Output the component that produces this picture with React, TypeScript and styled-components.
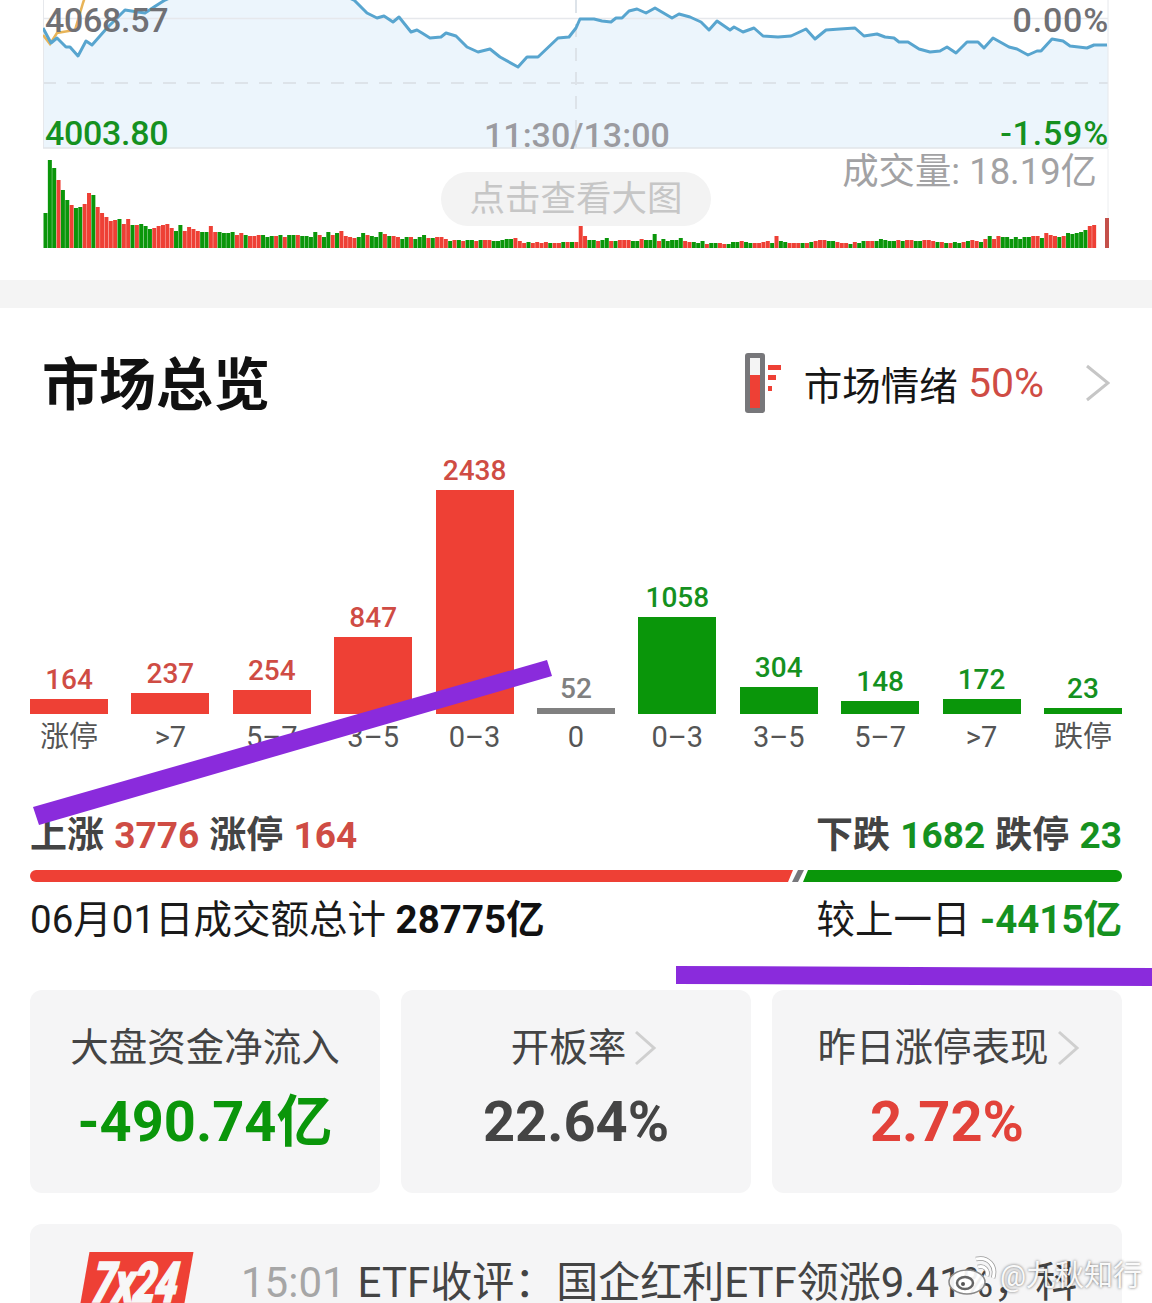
import React from "react";
import styled, { createGlobalStyle } from "styled-components";

const NUM_FONT = `Roboto, "Noto Sans CJK SC", sans-serif`;
const RED = "#ee4035";
const GREEN = "#0a960a";
const RED_TEXT = "#cf4c44";
const GREEN_TEXT = "#15911f";

const GlobalStyle = createGlobalStyle`
  html, body {
    margin: 0;
    padding: 0;
    background: #fff;
    font-family: ${NUM_FONT};
  }
`;

const Page = styled.div`
  position: relative;
  width: 1152px;
  height: 1303px;
  overflow: hidden;
  background: #fff;
`;

const PricePane = styled.div`
  position: relative;
  width: 1066px;
  height: 149px;
  margin-left: 43px;
  overflow: hidden;
  font-size: 34px;
  font-weight: 500;
  line-height: 40px;
`;

const ChartSvg = styled.svg`
  position: absolute;
  left: 0;
  top: 0;
  display: block;
`;

const PriceLabel = styled.span<{ $color: string; $x: "left" | "right" | "center"; $top: number }>`
  position: absolute;
  top: ${(p) => p.$top}px;
  color: ${(p) => p.$color};
  white-space: nowrap;
  ${(p) =>
    p.$x === "left"
      ? "left: 2px; letter-spacing: -0.3px;"
      : p.$x === "right"
      ? "right: 0; letter-spacing: 0.8px;"
      : "left: 441px;"}
`;

const VolumePane = styled.div`
  position: relative;
  width: 1066px;
  height: 131px;
  margin-left: 43px;
`;

const VolumeText = styled.span`
  position: absolute;
  right: 12px;
  top: 2px;
  color: #a2a2a4;
  font-size: 36.4px;
  line-height: 42px;
  white-space: nowrap;
`;

const BigPicPill = styled.div`
  position: absolute;
  left: 398px;
  top: 23px;
  width: 270px;
  height: 54px;
  border-radius: 27px;
  background: #f3f3f3;
  color: #c6c6c6;
  font-size: 35.5px;
  line-height: 54px;
  text-align: center;
`;

const Divider = styled.div`
  height: 28px;
  background: #f4f4f4;
`;

const OverviewHeader = styled.header`
  display: flex;
  align-items: center;
  justify-content: space-between;
  height: 150px;
  padding: 0 42px 0 42px;
`;

const OverviewTitle = styled.h1`
  margin: 5px 0 0;
  color: #111;
  font-size: 57px;
  font-weight: 700;
  line-height: 70px;
`;

const Mood = styled.div`
  display: flex;
  align-items: center;
  font-size: 38.5px;
  color: #151515;
`;

const MoodValue = styled.span`
  margin-left: 10px;
  color: ${RED_TEXT};
  font-size: 41px;
`;

const MoodIcon = styled.svg`
  width: 40px;
  height: 62px;
  margin-right: 21px;
`;

const MoodChevron = styled.svg`
  width: 26px;
  height: 40px;
  margin-left: 40px;
`;

const Body = styled.section`
  padding: 0 30px;
`;

const Columns = styled.div`
  display: flex;
  justify-content: space-between;
  height: 302px;
`;

const Column = styled.div`
  display: flex;
  flex-direction: column;
  justify-content: flex-end;
  align-items: center;
  width: 78px;
`;

const ColumnValue = styled.span<{ $color: string }>`
  flex: none;
  color: ${(p) => p.$color};
  font-size: 28px;
  font-weight: 500;
  line-height: 38px;
`;

const ColumnBar = styled.div<{ $h: number; $color: string }>`
  flex: none;
  width: 100%;
  height: ${(p) => p.$h}px;
  background: ${(p) => p.$color};
`;

const ColumnLabel = styled.span`
  flex: none;
  height: 46px;
  color: #555;
  font-size: 29px;
  line-height: 46px;
  white-space: nowrap;
`;

const StatRow = styled.div`
  display: flex;
  justify-content: space-between;
  margin-top: 53px;
  color: #444;
  font-size: 37px;
  font-weight: 700;
  line-height: 46px;
  word-spacing: 1px;
`;

const Tone = styled.span<{ $color: string }>`
  color: ${(p) => p.$color};
`;

const Ratio = styled.div`
  display: flex;
  height: 12px;
  margin-top: 11px;
`;

const RatioUp = styled.div`
  flex: 1;
  background: ${RED};
  border-radius: 6px 0 0 6px;
  clip-path: polygon(0 0, 100% 0, calc(100% - 5px) 100%, 0 100%);
`;

const RatioFlat = styled.div`
  width: 12px;
  margin: 0 -1px 0 -1px;
  background: #77777b;
  clip-path: polygon(6px 0, 100% 0, 6px 100%, 0 100%);
`;

const RatioDown = styled.div`
  width: 319px;
  background: ${GREEN};
  border-radius: 0 6px 6px 0;
  clip-path: polygon(5px 0, 100% 0, 100% 100%, 0 100%);
`;

const TotalRow = styled.div`
  display: flex;
  justify-content: space-between;
  margin-top: 15px;
  color: #1a1a1a;
  font-size: 38.5px;
  line-height: 46px;
`;

const Strong = styled.b<{ $color?: string }>`
  color: ${(p) => p.$color || "#111"};
  font-weight: 700;
`;

const Cards = styled.div`
  display: flex;
  gap: 21px;
  margin-top: 47px;
`;

const Card = styled.div`
  display: flex;
  flex: 1;
  flex-direction: column;
  align-items: center;
  height: 203px;
  padding-top: 31px;
  box-sizing: border-box;
  border-radius: 12px;
  background: #f5f5f6;
`;

const CardTitle = styled.div<{ $pad?: number }>`
  display: flex;
  align-items: center;
  padding-left: ${(p) => p.$pad || 0}px;
  color: #444;
  font-size: 38.5px;
  line-height: 54px;
  white-space: nowrap;
`;

const CardChevron = styled.svg`
  width: 24px;
  height: 38px;
  margin-left: 7px;
`;

const CardValue = styled.div<{ $color: string }>`
  margin-top: 12px;
  color: ${(p) => p.$color};
  font-size: 56px;
  font-weight: 700;
  line-height: 70px;
  white-space: nowrap;
`;

const Ticker = styled.div`
  display: flex;
  align-items: flex-start;
  height: 100px;
  margin-top: 31px;
  padding: 28px 0 0 52px;
  box-sizing: border-box;
  border-radius: 12px 12px 0 0;
  background: #f5f5f6;
  white-space: nowrap;
  overflow: hidden;
`;

const TickerLogo = styled.div`
  display: flex;
  align-items: center;
  justify-content: center;
  flex: none;
  width: 104px;
  height: 62px;
  margin: 0 53px 0 2px;
  background: ${RED};
  transform: skewX(-10deg);
`;

const TickerLogoText = styled.span`
  display: block;
  color: #f7f7f7;
  font-size: 50px;
  font-style: italic;
  font-weight: 900;
  line-height: 1;
  letter-spacing: -1px;
  -webkit-text-stroke: 1.5px #f7f7f7;
  transform: scale(0.8, 1.12) skewX(4deg);
`;

const TickerTime = styled.span`
  margin-top: 1px;
  margin-right: 12px;
  color: #a6a6a6;
  font-size: 42px;
  line-height: 60px;
`;

const TickerText = styled.span`
  margin-top: 1px;
  color: #444;
  font-size: 42px;
  line-height: 60px;
`;

const Overlay = styled.svg`
  position: absolute;
  left: 0;
  top: 0;
  pointer-events: none;
`;

const Watermark = styled.div`
  position: absolute;
  right: 10px;
  top: 1254px;
  display: flex;
  align-items: center;
  color: rgba(255, 255, 255, 0.94);
  font-size: 29px;
  line-height: 40px;
  text-shadow: 0 0 3px rgba(0, 0, 0, 0.6);
  white-space: nowrap;
`;

const WeiboMark = styled.svg`
  width: 52px;
  height: 44px;
  margin-right: 2px;
`;

const pricePoints =
  "43,28 51,43 57,38 66,47 70,47 78,56 86,41 92,45 107,28 112,23 125,10 138,12 145,13 154,7 165,0 260,-40 354,0 367,13 377,18 384,16 393,22 399,17 411,32 417,30 422,33 430,38 441,37 446,33 456,36 467,47 478,52 490,49 500,57 518,67 527,57 538,57 558,38 569,37 576,28 580,19 594,19 602,21 611,22 616,18 622,18 629,11 637,9 646,13 655,8 672,18 679,14 690,17 701,22 709,30 717,21 730,30 734,27 743,32 754,28 763,36 778,37 791,36 806,29 815,39 826,30 840,29 855,28 864,36 877,34 885,37 894,38 899,42 908,42 919,49 930,52 940,51 947,47 956,53 967,42 978,42 984,48 993,38 1009,47 1017,49 1028,55 1037,51 1041,51 1052,39 1063,41 1070,46 1087,48 1094,45 1107,45";

const volumeData =
  "g35 g88 g80 r68 g58 g48 r43 g40 g41 r44 r55 g53 r41 r35 r31 r27 r28 g29 r24 r29 g23 r23 g24 g22 g19 r20 r22 r23 r24 r20 g17 g23 r17 r21 r19 r17 g16 g16 r22 r16 g16 g15 g15 g16 r13 r15 g13 r12 r12 r13 g13 g11 g12 r12 g13 r11 g13 g13 r13 g12 g12 g11 g16 r13 " +
  "g11 g16 r13 g15 r17 r12 r11 r10 g11 g15 r13 g12 g11 g16 r14 g12 r12 r11 g9 g11 r11 g9 g11 g13 r10 g10 r11 r11 r9 g7 r8 g8 r7 g8 g8 r7 g8 r8 r8 g7 g7 g8 g9 g9 r10 r7 r5 g6 r5 r6 r5 r6 g5 r5 r5 g6 r6 g6 r6 r26 r12 g8 g8 r7 g8 g10 r7 g7 r8 r8 r8 g7 g7 r9 g8 g8 g14 r7 g9 g7 g8 g8 " +
  "g10 r7 r6 g6 g5 g7 r4 g5 g5 r5 r4 g4 g6 g6 r7 g6 g5 r5 r5 r6 r7 g5 r12 g7 g6 r5 r5 r5 g5 r5 g6 r7 r8 r8 g7 g7 r6 r5 r5 g4 r6 g5 g7 r7 r7 g7 g9 g8 g7 g7 r8 g7 r8 r8 g7 g7 r8 r8 r7 g6 r6 g5 r5 g6 g5 r6 g7 r8 r7 g6 r9 g12 r9 r12 g11 g11 g9 g11 g9 g11 g11 r12 r12 g10 r15 r13 r12 g11 r12 g15 g14 g15 g16 g18 r22 r23";

const volumeBars = volumeData.split(" ").map((v) => ({
  up: v[0] === "r",
  h: Number(v.slice(1)),
}));

const columns = [
  { value: "164", label: "涨停", h: 15, tone: "up" },
  { value: "237", label: ">7", h: 21, tone: "up" },
  { value: "254", label: "5–7", h: 24, tone: "up" },
  { value: "847", label: "3–5", h: 77, tone: "up" },
  { value: "2438", label: "0–3", h: 224, tone: "up" },
  { value: "52", label: "0", h: 6, tone: "flat" },
  { value: "1058", label: "0–3", h: 97, tone: "down" },
  { value: "304", label: "3–5", h: 27, tone: "down" },
  { value: "148", label: "5–7", h: 13, tone: "down" },
  { value: "172", label: ">7", h: 15, tone: "down" },
  { value: "23", label: "跌停", h: 6, tone: "down" },
];

const barColor: Record<string, string> = { up: RED, flat: "#808080", down: GREEN };
const valueColor: Record<string, string> = { up: RED_TEXT, flat: "#808080", down: GREEN_TEXT };

const Chevron: React.FC = () => (
  <path d="M3 3 L21 19 L3 35" fill="none" stroke="#cfcfcf" strokeWidth="3" />
);

const App: React.FC = () => {
  return (
    <Page>
      <GlobalStyle />
      <PricePane>
        <ChartSvg width="1066" height="149" viewBox="43 0 1066 149">
          <polygon points={`43,148 ${pricePoints} 1108,45 1108,148`} fill="#ecf5fc" />
          <line x1="43" y1="18.5" x2="1108" y2="18.5" stroke="#e6e8ec" strokeWidth="1.5" />
          <line x1="43" y1="83" x2="1108" y2="83" stroke="#dde3e9" strokeWidth="2" strokeDasharray="13 11" />
          <line x1="576" y1="0" x2="576" y2="148" stroke="#dde3e9" strokeWidth="2" strokeDasharray="13 11" />
          <line x1="43.5" y1="0" x2="43.5" y2="148" stroke="#e6e8ec" />
          <line x1="1108" y1="0" x2="1108" y2="148" stroke="#e6e8ec" />
          <line x1="43" y1="148" x2="1108" y2="148" stroke="#e2e4e8" strokeWidth="1.5" />
          <polyline points="43,35 50,44 57,33 75,30 83,3 85,-3" fill="none" stroke="#e8b458" strokeWidth="2.5" />
          <polyline points={pricePoints} fill="none" stroke="#58a5cf" strokeWidth="3" strokeLinejoin="round" />
        </ChartSvg>
        <PriceLabel $color="#707074" $x="left" $top={0}>4068.57</PriceLabel>
        <PriceLabel $color="#707074" $x="right" $top={0}>0.00%</PriceLabel>
        <PriceLabel $color={GREEN_TEXT} $x="left" $top={113}>4003.80</PriceLabel>
        <PriceLabel $color="#9b9ba0" $x="center" $top={115}>11:30/13:00</PriceLabel>
        <PriceLabel $color={GREEN_TEXT} $x="right" $top={113}>-1.59%</PriceLabel>
      </PricePane>
      <VolumePane>
        <ChartSvg width="1066" height="100" viewBox="43 149 1066 100">
          <line x1="1108" y1="149" x2="1108" y2="248" stroke="#eceef0" />
          {volumeBars.map((b, i) => (
            <rect
              key={i}
              x={43.5 + (i * 1053) / volumeBars.length}
              y={248 - b.h}
              width={4}
              height={b.h}
              fill={b.up ? RED : GREEN}
            />
          ))}
          <rect x="1105" y="218" width="4" height="30" fill="#c4504a" />
        </ChartSvg>
        <VolumeText>成交量: 18.19亿</VolumeText>
        <BigPicPill>点击查看大图</BigPicPill>
      </VolumePane>
      <Divider />
      <OverviewHeader>
        <OverviewTitle>市场总览</OverviewTitle>
        <Mood>
          <MoodIcon viewBox="0 0 40 62">
            <rect x="2" y="1" width="20" height="60" rx="3" fill="#77777a" />
            <rect x="7" y="6" width="10" height="50" fill="#f4f4f4" />
            <rect x="7" y="23" width="10" height="33" fill={RED} />
            <rect x="25" y="13" width="13" height="5" fill={RED} />
            <rect x="25" y="23" width="8" height="5" fill={RED} />
            <rect x="25" y="34" width="4" height="5" fill={RED} />
          </MoodIcon>
          市场情绪
          <MoodValue>50%</MoodValue>
          <MoodChevron viewBox="0 0 26 40">
            <path d="M3 3 L24 20 L3 37" fill="none" stroke="#c6c6c6" strokeWidth="3" />
          </MoodChevron>
        </Mood>
      </OverviewHeader>
      <Body>
        <Columns>
          {columns.map((c, i) => (
            <Column key={i}>
              <ColumnValue $color={valueColor[c.tone]}>{c.value}</ColumnValue>
              <ColumnBar $h={c.h} $color={barColor[c.tone]} />
              <ColumnLabel>{c.label}</ColumnLabel>
            </Column>
          ))}
        </Columns>
        <StatRow>
          <span>
            上涨 <Tone $color={RED_TEXT}>3776</Tone> 涨停 <Tone $color={RED_TEXT}>164</Tone>
          </span>
          <span>
            下跌 <Tone $color={GREEN_TEXT}>1682</Tone> 跌停 <Tone $color={GREEN_TEXT}>23</Tone>
          </span>
        </StatRow>
        <Ratio>
          <RatioUp />
          <RatioFlat />
          <RatioDown />
        </Ratio>
        <TotalRow>
          <span>
            06月01日成交额总计 <Strong>28775亿</Strong>
          </span>
          <span>
            较上一日 <Strong $color={GREEN_TEXT}>-4415亿</Strong>
          </span>
        </TotalRow>
        <Cards>
          <Card>
            <CardTitle>大盘资金净流入</CardTitle>
            <CardValue $color={GREEN}>-490.74亿</CardValue>
          </Card>
          <Card>
            <CardTitle $pad={16}>
              开板率
              <CardChevron viewBox="0 0 24 38"><Chevron /></CardChevron>
            </CardTitle>
            <CardValue $color="#444">22.64%</CardValue>
          </Card>
          <Card>
            <CardTitle $pad={3}>
              昨日涨停表现
              <CardChevron viewBox="0 0 24 38"><Chevron /></CardChevron>
            </CardTitle>
            <CardValue $color="#e2423a">2.72%</CardValue>
          </Card>
        </Cards>
        <Ticker>
          <TickerLogo>
            <TickerLogoText>7x24</TickerLogoText>
          </TickerLogo>
          <TickerTime>15:01</TickerTime>
          <TickerText>ETF收评：国企红利ETF领涨9.41%，科</TickerText>
        </Ticker>
      </Body>
      <Overlay width="1152" height="1303" viewBox="0 0 1152 1303">
        <polygon points="33,807 547,660 552,676 39,825" fill="#8a2bdc" />
        <polygon points="676,966 1152,968 1152,986 676,984" fill="#8a2bdc" />
      </Overlay>
      <Watermark>
        <WeiboMark viewBox="0 0 52 44">
          <ellipse cx="21" cy="28" rx="18" ry="12" fill="rgba(255,255,255,0.92)" stroke="#888" strokeWidth="1.5" />
          <ellipse cx="19" cy="29" rx="8" ry="6" fill="none" stroke="#666" strokeWidth="2.5" />
          <circle cx="17" cy="30" r="2" fill="#555" />
          <path d="M30 5 C42 2 51 12 47 24" fill="none" stroke="#999" strokeWidth="4.5" />
          <path d="M30 5 C42 2 51 12 47 24" fill="none" stroke="#fff" strokeWidth="3" />
          <path d="M32 13 C38 11 43 16 41 22" fill="none" stroke="#999" strokeWidth="4.5" />
          <path d="M32 13 C38 11 43 16 41 22" fill="none" stroke="#fff" strokeWidth="3" />
        </WeiboMark>
        @九秋知行
      </Watermark>
    </Page>
  );
};

export default App;
